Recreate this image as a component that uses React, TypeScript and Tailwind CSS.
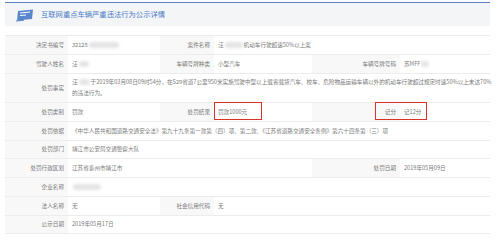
import type { ReactNode } from "react";

function Blur({ w }: { w: string }) {
  return <span className={`mx-[1px] inline-block h-[6px] ${w} rounded-full bg-[#e4e4e4] align-middle blur-[1.5px]`} />;
}

function Label({ children }: { children: ReactNode }) {
  return <div className="flex items-center justify-end bg-[#f8f8f8] pr-[4px] text-right">{children}</div>;
}

function Value({ children, span }: { children: ReactNode; span?: string }) {
  return <div className={`flex items-center pl-[4px] ${span ?? ""}`}>{children}</div>;
}

function Row({ children, h = "h-[19px]" }: { children: ReactNode; h?: string }) {
  return (
    <div className={`grid ${h} grid-cols-[63px_92px_54px_98px_88px_90px] border-b border-[#ececec]`}>
      {children}
    </div>
  );
}

function TicketIcon() {
  return (
    <svg width="20" height="14" viewBox="0 0 20 14" fill="none">
      <path d="M3 3 L18 1.5 L17 11 L2 12.5 Z" fill="#5a86cc" />
      <path d="M5 5 L15 4" stroke="#fff" strokeWidth="1" />
      <path d="M5 7.5 L11 7" stroke="#fff" strokeWidth="1" />
      <path d="M1 13 L9 12.2" stroke="#5a86cc" strokeWidth="1.2" />
    </svg>
  );
}

export default function App() {
  return (
    <main
      className="relative h-[242px] w-[500px] overflow-hidden bg-white text-[5.6px] leading-[11px] text-[#7a7a7a]"
      style={{ fontFamily: '"Noto Sans CJK SC", "Liberation Sans", sans-serif' }}
    >
      <div className="ml-[5px] w-[485px]">
        <div className="mt-[2px] flex h-[24px] items-center gap-[6px] border-t-[1.5px] border-[#5b80c3] bg-[#f4f5f7] pl-[10px]">
          <TicketIcon />
          <span className="text-[7.3px] text-[#4a7bc8]">互联网重点车辆严重违法行为公示详情</span>
        </div>

        <div className="mt-[9px] border-t border-[#ececec]">
          <Row>
            <Label>决定书编号</Label>
            <Value>
              32128
              <Blur w="w-[30px]" />
            </Value>
            <Label>案件名称</Label>
            <Value span="col-span-3">
              汪<Blur w="w-[18px]" />
              机动车行驶超速50%以上案
            </Value>
          </Row>
          <Row>
            <Label>驾驶人姓名</Label>
            <Value>
              汪<Blur w="w-[10px]" />
            </Value>
            <Label>车辆号牌种类</Label>
            <Value>小型汽车</Value>
            <Label>车辆号牌号码</Label>
            <Value>
              苏MFF
              <Blur w="w-[8px]" />
            </Value>
          </Row>
          <Row h="h-[29px]">
            <Label>处罚事实</Label>
            <div className="col-span-5 flex flex-col justify-center pl-[4px]">
              <p className="whitespace-nowrap">
                汪<Blur w="w-[11px]" />
                于2019年03月08日09时54分，在S29省道7公里950米实施驾驶中型以上载客载货汽车、校车、危险物品运输车辆以外的机动车行驶超过规定时速50%以上未达70%
              </p>
              <p>的违法行为。</p>
            </div>
          </Row>
          <Row>
            <Label>处罚类别</Label>
            <Value>罚款</Value>
            <Label>处罚结果</Label>
            <Value>罚款1000元</Value>
            <Label>记分</Label>
            <Value>记12分</Value>
          </Row>
          <Row>
            <Label>处罚依据</Label>
            <Value span="col-span-5">
              《中华人民共和国道路交通安全法》第九十九条第一款第（四）项、第二款、《江苏省道路交通安全条例》第六十四条第（三）项
            </Value>
          </Row>
          <Row h="h-[18px]">
            <Label>处罚部门</Label>
            <Value span="col-span-5">靖江市公安局交通警察大队</Value>
          </Row>
          <Row>
            <Label>处罚行政区划</Label>
            <Value span="col-span-3">江苏省泰州市靖江市</Value>
            <Label>处罚日期</Label>
            <Value>2019年05月09日</Value>
          </Row>
          <Row>
            <Label>企业名称</Label>
            <Value span="col-span-5">
              <Blur w="w-[28px]" />
            </Value>
          </Row>
          <Row>
            <Label>法人名称</Label>
            <Value>无</Value>
            <Label>社会信用代码</Label>
            <Value span="col-span-3">无</Value>
          </Row>
          <Row h="h-[18px]">
            <Label>公示日期</Label>
            <Value span="col-span-5">2019年05月17日</Value>
          </Row>
        </div>
      </div>

      <div className="absolute left-[214px] top-[102px] h-[18px] w-[48px] border-[1.5px] border-[#d8322b]" />
      <div className="absolute left-[375px] top-[102px] h-[18px] w-[52px] border-[1.5px] border-[#d8322b]" />
    </main>
  );
}
